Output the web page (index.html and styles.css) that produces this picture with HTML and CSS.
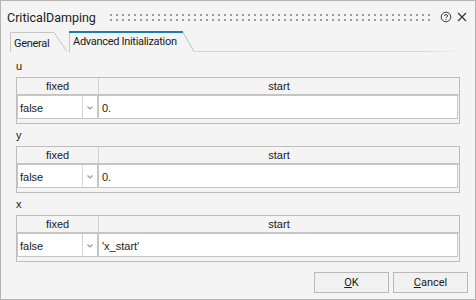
FILE: index.html
```html
<!DOCTYPE html>
<html>
<head>
<meta charset="utf-8">
<link rel="stylesheet" href="styles.css">
</head>
<body>
<div class="window">
  <div class="titlebar">
    <span class="title">CriticalDamping</span>
    <span class="grip"></span>
    <svg class="help" width="12" height="12" viewBox="0 0 12 12">
      <circle cx="6" cy="6" r="4.8" fill="none" stroke="#3a3a3a" stroke-width="1"/>
      <path d="M4.3 4.9 C4.3 3.2 7.7 3.2 7.7 4.9 C7.7 6 6 6 6 7.2" fill="none" stroke="#3a3a3a" stroke-width="1"/>
      <rect x="5.5" y="8.1" width="1" height="1" fill="#3a3a3a"/>
    </svg>
    <svg class="close" width="10" height="10" viewBox="0 0 10 10">
      <path d="M1 1 L9 9 M9 1 L1 9" stroke="#333" stroke-width="1.1" fill="none"/>
    </svg>
  </div>

  <div class="tabstrip">
    <svg class="tabshape" width="476" height="23" viewBox="0 0 476 23">
      <defs>
        <linearGradient id="fade" x1="0" x2="1" y1="0" y2="0">
          <stop offset="0" stop-color="#d2d2d2"/>
          <stop offset="0.85" stop-color="#dadada"/>
          <stop offset="1" stop-color="#f4f4f4"/>
        </linearGradient>
      </defs>
      <path d="M9.5 22 V2.5 H53 L66 21.5" fill="none" stroke="#c6c6c6" stroke-width="1"/>
      <path d="M68.5 22 V1.5" fill="none" stroke="#c6c6c6" stroke-width="1"/>
      <path d="M181.5 1.5 L193 21.5" fill="none" stroke="#bdbdbd" stroke-width="1"/>
      <rect x="68" y="1" width="114" height="2" fill="#1d7fae"/>
      <rect x="193" y="21" width="270" height="1" fill="url(#fade)"/>
    </svg>
    <div class="tabs">
      <span class="tab tab-general">General</span>
      <span class="tab tab-active">Advanced Initialization</span>
    </div>
  </div>

  <div class="content">
    <section class="var">
      <div class="label">u</div>
      <div class="table">
        <div class="thead"><div class="th th-fixed">fixed</div><div class="th">start</div></div>
        <div class="trow">
          <div class="combo"><span class="combo-text">false</span><span class="combo-arrow"><svg width="6" height="4" viewBox="0 0 6 4"><path d="M0.5 0.5 L3 3 L5.5 0.5" fill="none" stroke="#9a9a9a" stroke-width="1.2"/></svg></span></div>
          <div class="field">0.</div>
        </div>
      </div>
    </section>
    <section class="var">
      <div class="label">y</div>
      <div class="table">
        <div class="thead"><div class="th th-fixed">fixed</div><div class="th">start</div></div>
        <div class="trow">
          <div class="combo"><span class="combo-text">false</span><span class="combo-arrow"><svg width="6" height="4" viewBox="0 0 6 4"><path d="M0.5 0.5 L3 3 L5.5 0.5" fill="none" stroke="#9a9a9a" stroke-width="1.2"/></svg></span></div>
          <div class="field">0.</div>
        </div>
      </div>
    </section>
    <section class="var">
      <div class="label">x</div>
      <div class="table">
        <div class="thead"><div class="th th-fixed">fixed</div><div class="th">start</div></div>
        <div class="trow">
          <div class="combo"><span class="combo-text">false</span><span class="combo-arrow"><svg width="6" height="4" viewBox="0 0 6 4"><path d="M0.5 0.5 L3 3 L5.5 0.5" fill="none" stroke="#9a9a9a" stroke-width="1.2"/></svg></span></div>
          <div class="field">'x_start'</div>
        </div>
      </div>
    </section>
  </div>

  <div class="buttons">
    <button class="btn"><u>O</u>K</button>
    <button class="btn"><u>C</u>ancel</button>
  </div>
</div>
</body>
</html>
```

FILE: styles.css
```css
* { box-sizing: border-box; }
html, body { margin: 0; padding: 0; background: #f4f4f4; }
.window {
  width: 476px;
  height: 300px;
  border: 1px solid #b4b4b4;
  background: #f4f4f4;
  display: flex;
  flex-direction: column;
  font-family: "Liberation Sans", Arial, sans-serif;
  color: #1a1a1a;
}
.titlebar {
  height: 29px;
  display: flex;
  align-items: center;
}
.title {
  width: 109px;
  padding-left: 6px;
  font-family: Roboto, "Liberation Sans", sans-serif;
  font-size: 12.5px;
  color: #222;
  padding-top: 3px;
}
.grip {
  width: 322px;
  height: 7px;
  margin-top: 3px;
  background-image: conic-gradient(from 270deg at 2px 2px, #9c9c9c 25%, transparent 0);
  background-size: 6px 5px;
}
.help { margin-left: 8px; margin-top: 3px; }
.close { margin-left: 5px; margin-top: 3px; }

.tabstrip {
  height: 23px;
  display: grid;
}
.tabshape, .tabs { grid-area: 1 / 1; }
.tabs {
  display: flex;
  font-family: Roboto, "Liberation Sans", sans-serif;
  font-size: 11px;
  letter-spacing: -0.3px;
  color: #1a1a1a;
}
.tab { display: block; }
.tab-general { width: 67px; padding-left: 13px; padding-top: 7px; }
.tab-active { padding-left: 5px; padding-top: 5px; }

.content {
  padding: 7px 15px 0 15px;
  display: flex;
  flex-direction: column;
  gap: 5px;
}
.label {
  font-size: 11px;
  line-height: 12px;
  height: 12px;
  margin-bottom: 5px;
  color: #1a1a1a;
}
.table {
  border: 1px solid #bdbdbd;
  padding-bottom: 4px;
  font-size: 11px;
}
.thead {
  display: flex;
  height: 17px;
  border-bottom: 1px solid #c4c4c4;
}
.th {
  flex: 1;
  text-align: center;
  line-height: 16px;
}
.th-fixed {
  flex: 0 0 82px;
  border-right: 1px solid #d2d2d2;
}
.trow {
  display: flex;
  height: 24px;
  padding-right: 1px;
}
.combo {
  width: 81px;
  display: flex;
  background: #fff;
  border: 1px solid #c6c6c6;
}
.combo-text {
  flex: 1;
  padding-left: 2px;
  line-height: 22px;
  padding-top: 1px;
  border-right: 1px solid #d6d6d6;
}
.combo-arrow {
  width: 14px;
  display: flex;
  align-items: center;
  justify-content: center;
  padding-top: 1px;
}
.field {
  flex: 1;
  background: #fff;
  border: 1px solid #c6c6c6;
  padding-left: 3px;
  line-height: 22px;
  padding-top: 1px;
}

.buttons {
  margin-top: 10px;
  display: flex;
  justify-content: flex-end;
  gap: 4px;
  padding-right: 7px;
}
.btn {
  width: 75px;
  height: 21px;
  margin: 0;
  padding: 0;
  border: 1px solid #b9b9b9;
  background: #f1f1f1;
  font-family: Roboto, "Liberation Sans", sans-serif;
  font-size: 11px;
  color: #1a1a1a;
  text-align: center;
  line-height: 19px;
}
.btn u { text-decoration: underline; text-underline-offset: 1px; }
```
